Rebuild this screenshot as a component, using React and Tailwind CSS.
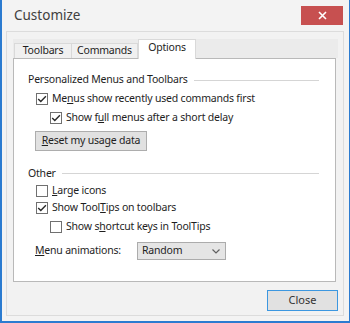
import React from "react";

function Box({ checked }) {
  return (
    <span className="w-[12px] h-[12px] border border-[#707070] bg-white flex items-center justify-center shrink-0">
      {checked && (
        <svg width="10" height="10" viewBox="0 0 10 10">
          <path d="M1.2 4.9 L3.8 7.5 L8.9 2.2" fill="none" stroke="#2a2a2a" strokeWidth="1.4" />
        </svg>
      )}
    </span>
  );
}

function Row({ checked, indent, h, children }) {
  return (
    <div className={`${h} flex items-center ${indent ? "pl-[22px]" : "pl-[8px]"}`}>
      <Box checked={checked} />
      <span className="ml-[4px]">{children}</span>
    </div>
  );
}

function Heading({ h, children }) {
  return (
    <div className={`${h} flex items-center pr-[16px]`}>
      <span>{children}</span>
      <span className="flex-1 h-px bg-[#d5d5d5] ml-[6px]" />
    </div>
  );
}

export default function App() {
  return (
    <div className="w-[350px] h-[323px] bg-[#f3f3f3] border-l-2 border-r border-b-2 border-[#2b7bd0] flex flex-col font-['Noto_Sans',sans-serif] text-[10.5px] tracking-[-0.2px] text-[#1e1e1e] overflow-hidden">
      <div className="h-[31px] shrink-0 flex items-start justify-between">
        <span className="ml-[12px] mt-[5px] text-[13.5px] tracking-normal text-[#404040]">Customize</span>
        <div className="mt-[6px] mr-[6px] w-[42px] h-[19px] bg-[#c75050] flex items-center justify-center">
          <svg width="9" height="9" viewBox="0 0 9 9">
            <path d="M1 1 L8 8 M8 1 L1 8" stroke="#fff" strokeWidth="1.6" />
          </svg>
        </div>
      </div>
      <div className="ml-[4px] mr-[5px] mb-[5px] flex-1 border border-[#dcdcdc] bg-[#f2f2f2] flex flex-col pl-[6px] pr-[5px] pt-[7px] pb-[4px]">
        <div className="h-[19px] shrink-0 flex items-end bg-[#ebebeb] pl-px">
          <div className="h-[15px] w-[58px] border border-b-0 border-[#d9d9d9] bg-[#f0f0f0] flex items-center justify-center">Toolbars</div>
          <div className="h-[15px] w-[66px] border border-b-0 border-l-0 border-[#d9d9d9] bg-[#f0f0f0] flex items-center justify-center">Commands</div>
          <div className="relative z-10 -mb-px h-[20px] w-[58px] border border-b-0 border-[#d9d9d9] bg-white flex items-center justify-center pb-[3px]">Options</div>
        </div>
        <div className="h-[224px] shrink-0 mr-[2px] bg-white border border-[#b9b9b9] flex flex-col pl-[14px] pt-[12px]">
          <Heading h="h-[18px]">Personalized Menus and Toolbars</Heading>
          <Row checked h="h-[19px]">Me<u>n</u>us show recently used commands first</Row>
          <Row checked indent h="h-[19px]">Show f<u>u</u>ll menus after a short delay</Row>
          <div className="mt-[4px] ml-[7px] w-[112px] h-[20px] bg-[#e1e1e1] border border-[#adadad] flex items-center justify-center">
            <span><u>R</u>eset my usage data</span>
          </div>
          <div className="mt-[14px]">
            <Heading h="h-[17px]">Other</Heading>
          </div>
          <Row h="h-[17px]"><u>L</u>arge icons</Row>
          <Row checked h="h-[18px]">Show Tool<u>T</u>ips on toolbars</Row>
          <Row indent h="h-[19px]">Show s<u>h</u>ortcut keys in ToolTips</Row>
          <div className="mt-[6px] flex items-center pl-[7px]">
            <span className="w-[102px]"><u>M</u>enu animations:</span>
            <div className="w-[89px] h-[18px] bg-[#e5e5e5] border border-[#acacac] flex items-center justify-between pl-[4px] pr-[5px]">
              <span>Random</span>
              <svg width="8" height="5" viewBox="0 0 8 5">
                <path d="M0.5 0.5 L4 4 L7.5 0.5" fill="none" stroke="#606060" strokeWidth="1.2" />
              </svg>
            </div>
          </div>
        </div>
        <div className="flex-1" />
        <div className="self-end w-[71px] h-[21px] bg-[#e1e1e1] border border-[#3c97e0] flex items-center justify-center text-[11px] tracking-normal text-[#333]">Close</div>
      </div>
    </div>
  );
}
